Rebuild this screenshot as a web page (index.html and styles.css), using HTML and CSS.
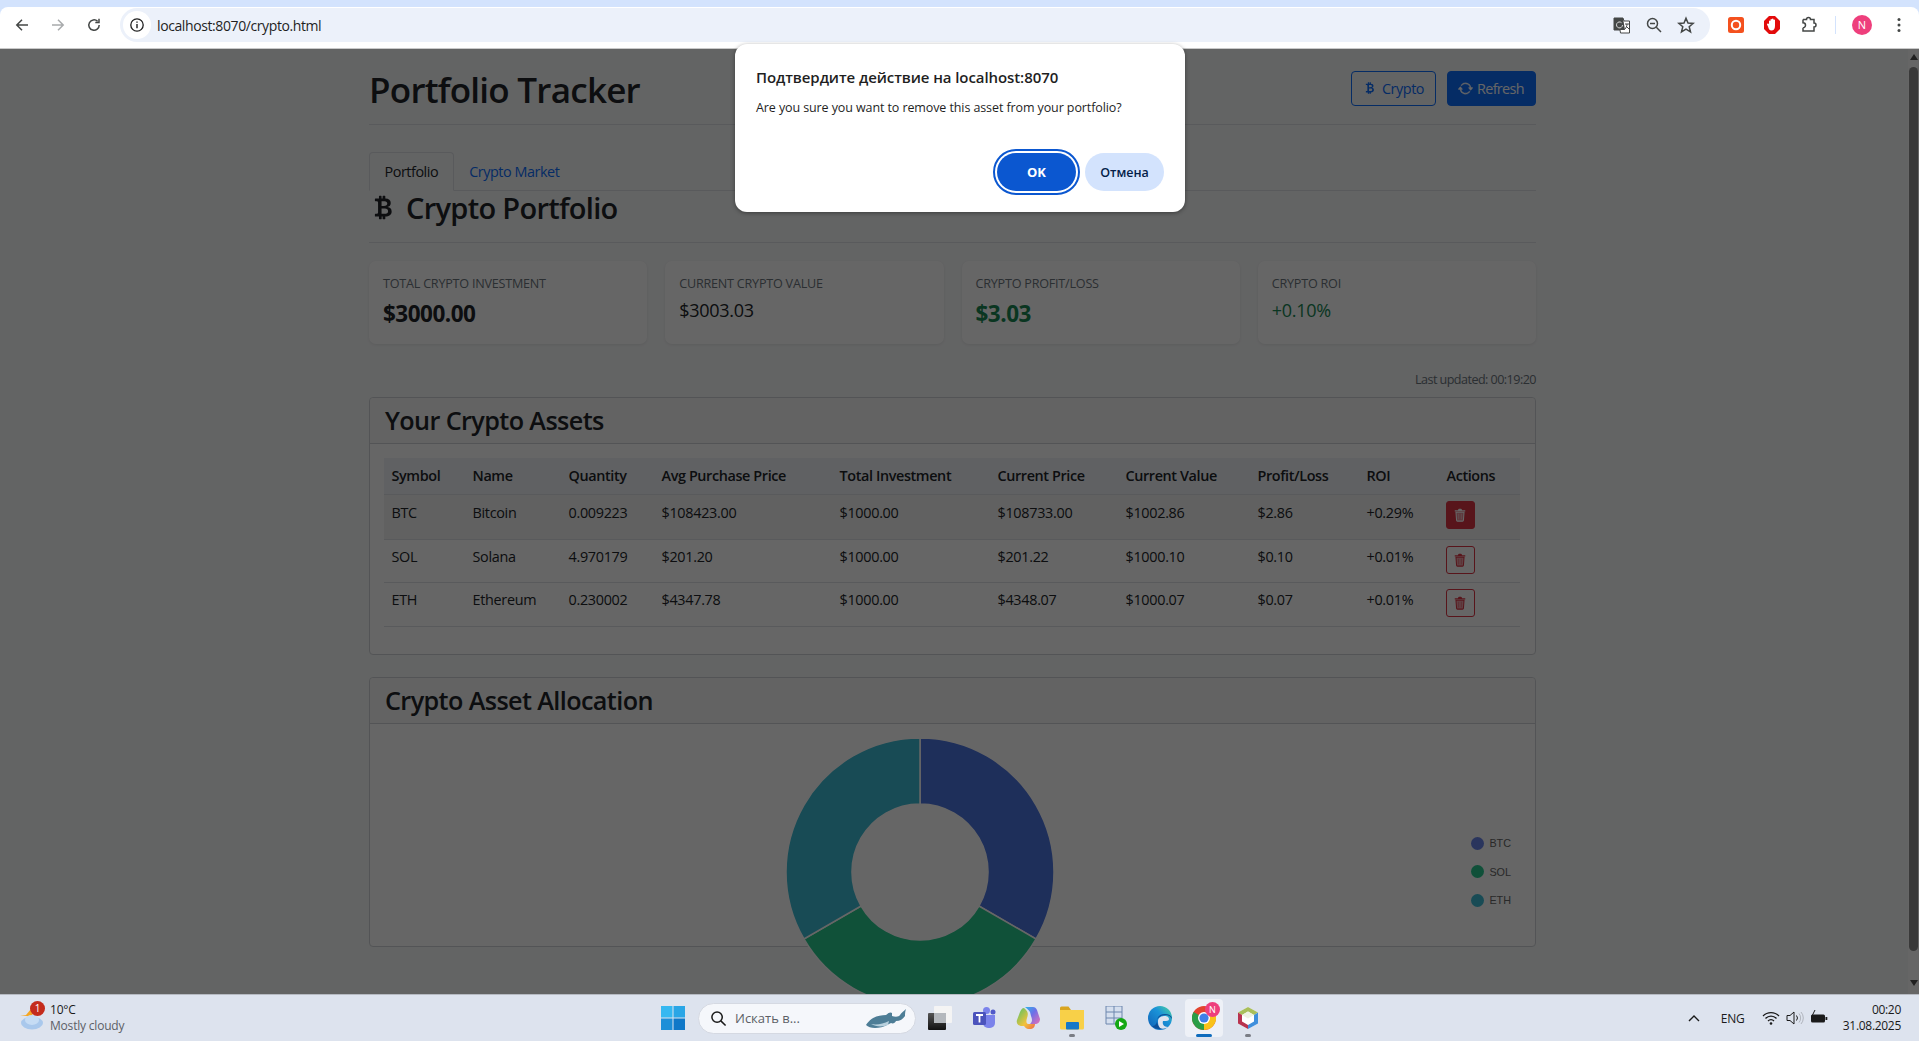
FILE: index.html
```html
<!DOCTYPE html>
<html lang="en">
<head>
<meta charset="utf-8">
<title>Portfolio Tracker</title>
<link rel="stylesheet" href="styles.css">
</head>
<body>
<div class="screen">
  <header class="chrome">
    <div class="toolbar">
      <div class="navs">
        <svg class="nav" viewBox="0 0 16 16"><path d="M14 8H3M8 2.8 2.8 8 8 13.200" fill="none" stroke="#444746" stroke-width="1.500"/></svg>
        <svg class="nav" viewBox="0 0 16 16"><path d="M2 8h11M8 2.800 13.200 8 8 13.200" fill="none" stroke="#a8aaac" stroke-width="1.500"/></svg>
        <svg class="nav" viewBox="0 0 16 16"><path d="M13.200 8A5.200 5.200 0 1 1 11.600 4.300M13 1.800v3.700H9.300" fill="none" stroke="#444746" stroke-width="1.500"/></svg>
      </div>
      <div class="omnibox">
        <span class="info"><svg viewBox="0 0 16 16" class="info-icon"><circle cx="8" cy="8" r="6.200" fill="none" stroke="#1f1f1f" stroke-width="1.300"/><path d="M8 7v4.200M8 4.400v1.300" stroke="#1f1f1f" stroke-width="1.400"/></svg></span>
        <span class="url">localhost:8070/crypto.html</span>
        <span class="omni-icons">
          <svg class="omni-icon" viewBox="0 0 18 18"><path d="M1 2h9l1 3h5.500v12H7.500L7 14H1z" fill="#fff" stroke="#444746"/><path d="M1 2h9l2 12H1z" fill="#444746"/><path d="M9.500 9a3 3 0 1 1-1-2.300" fill="none" stroke="#ddd" stroke-width="1"/><path d="M12 8h4M14 8c0 2-1 4-2 5M13 10l3 3" fill="none" stroke="#444746"/></svg>
          <svg class="omni-icon" viewBox="0 0 18 18"><circle cx="7.500" cy="7.500" r="5" fill="none" stroke="#444746" stroke-width="1.500"/><path d="M11.300 11.300 16 16M5 7.500h5" stroke="#444746" stroke-width="1.500"/></svg>
          <svg class="omni-icon" viewBox="0 0 18 18"><path d="M9 2.200 11 7l5.200.4-4 3.400 1.300 5.100L9 13.200l-4.500 2.700 1.300-5.100-4-3.400L7 7z" fill="none" stroke="#444746" stroke-width="1.500"/></svg>
        </span>
      </div>
      <div class="extensions">
        <svg class="ext ext-a" viewBox="0 0 16 16"><rect width="16" height="16" rx="2.500" fill="#f4511e"/><circle cx="8" cy="8" r="4.200" fill="none" stroke="#fff" stroke-width="2"/></svg>
        <svg class="ext ext-b" viewBox="0 0 16 18"><path d="M5 0h6l5 5v8l-5 5H5l-5-5V5z" fill="#e30b0b"/><path d="M5 8V5a.8.8 0 0 1 1.500 0V3.500a.8.8 0 0 1 1.500 0v-.5a.8.800 0 0 1 1.500 0v1a.8.800 0 0 1 1.500 0v6c0 3-1.500 4.500-3.500 4.500-2 0-2.800-1.500-3.500-4L3 8.500C3 7.500 4.500 7 5 8z" fill="#fff"/></svg>
        <svg class="ext ext-c" viewBox="0 0 18 18"><path d="M3 3.500h3.500a2 2 0 0 1 4 0H14v3.500a2 2 0 0 1 0 4V15H3v-3.200M3 11.800a2.400 2.400 0 0 0 0-5V3.500" fill="none" stroke="#444746" stroke-width="1.500"/></svg>
        <span class="sep"></span>
        <span class="avatar">N</span>
        <svg class="kebab" viewBox="0 0 4 16"><circle cx="2" cy="2.500" r="1.500" fill="#444746"/><circle cx="2" cy="8" r="1.500" fill="#444746"/><circle cx="2" cy="13.500" r="1.500" fill="#444746"/></svg>
      </div>
    </div>
  </header>

  <div class="viewport">
    <main class="page">
      <div class="topbar">
        <h1 class="title">Portfolio Tracker</h1>
        <div class="top-actions">
          <button class="btn btn-outline"><svg class="bi" viewBox="0 0 16 16"><use href="#i-btc"/></svg>Crypto</button>
          <button class="btn btn-solid"><svg class="bi bi-sync" viewBox="0 0 16 16"><use href="#i-refresh"/></svg>Refresh</button>
        </div>
      </div>
      <nav class="tabs">
        <span class="tab tab-active">Portfolio</span>
        <span class="tab">Crypto Market</span>
      </nav>
      <h2 class="section-title"><svg class="section-icon" viewBox="0 0 16 16"><use href="#i-btc"/></svg>Crypto Portfolio</h2>
      <section class="stats">
        <div class="stat"><div class="stat-label">TOTAL CRYPTO INVESTMENT</div><div class="stat-value stat-strong">$3000.00</div></div>
        <div class="stat"><div class="stat-label">CURRENT CRYPTO VALUE</div><div class="stat-value">$3003.03</div></div>
        <div class="stat"><div class="stat-label">CRYPTO PROFIT/LOSS</div><div class="stat-value stat-strong stat-green">$3.03</div></div>
        <div class="stat"><div class="stat-label">CRYPTO ROI</div><div class="stat-value stat-green">+0.10%</div></div>
      </section>
      <div class="updated">Last updated: 00:19:20</div>
      <section class="card card-assets">
        <h3 class="card-header">Your Crypto Assets</h3>
        <div class="card-body">
          <table class="assets">
            <colgroup>
              <col class="c1"><col class="c2"><col class="c3"><col class="c4"><col class="c5"><col class="c6"><col class="c7"><col class="c8"><col class="c9"><col class="c10">
            </colgroup>
            <thead>
              <tr><th>Symbol</th><th>Name</th><th>Quantity</th><th>Avg Purchase Price</th><th>Total Investment</th><th>Current Price</th><th>Current Value</th><th>Profit/Loss</th><th>ROI</th><th>Actions</th></tr>
            </thead>
            <tbody>
              <tr class="row-hover r1"><td>BTC</td><td>Bitcoin</td><td>0.009223</td><td>$108423.00</td><td>$1000.00</td><td>$108733.00</td><td>$1002.86</td><td>$2.86</td><td>+0.29%</td><td><button class="del del-on"><svg viewBox="0 0 16 16"><use href="#i-trash"/></svg></button></td></tr>
              <tr class="r2"><td>SOL</td><td>Solana</td><td>4.970179</td><td>$201.20</td><td>$1000.00</td><td>$201.22</td><td>$1000.10</td><td>$0.10</td><td>+0.01%</td><td><button class="del"><svg viewBox="0 0 16 16"><use href="#i-trash"/></svg></button></td></tr>
              <tr class="r3"><td>ETH</td><td>Ethereum</td><td>0.230002</td><td>$4347.78</td><td>$1000.00</td><td>$4348.07</td><td>$1000.07</td><td>$0.07</td><td>+0.01%</td><td><button class="del"><svg viewBox="0 0 16 16"><use href="#i-trash"/></svg></button></td></tr>
            </tbody>
          </table>
        </div>
      </section>
      <section class="card card-chart">
        <h3 class="card-header">Crypto Asset Allocation</h3>
        <div class="chart-body">
          <svg class="donut" viewBox="0 0 270 270">
            <path d="M135 2A133 133 0 0 1 250.200 201.500L193.500 168.750A67.500 67.500 0 0 0 135 67.500Z" fill="#4d75e2" stroke="#fff" stroke-width="1.500"/>
            <path d="M250.200 201.500A133 133 0 0 1 19.800 201.500L76.500 168.750A67.500 67.500 0 0 0 193.500 168.750Z" fill="#28cb8f" stroke="#fff" stroke-width="1.500"/>
            <path d="M19.800 201.500A133 133 0 0 1 135 2V67.500A67.500 67.500 0 0 0 76.500 168.750Z" fill="#3cbcd4" stroke="#fff" stroke-width="1.500"/>
          </svg>
          <ul class="legend">
            <li><span class="dot dot-btc"></span>BTC</li>
            <li><span class="dot dot-sol"></span>SOL</li>
            <li><span class="dot dot-eth"></span>ETH</li>
          </ul>
        </div>
      </section>
    </main>
    <div class="scrollbar">
      <span class="arrow-up"></span>
      <span class="thumb"></span>
      <span class="arrow-down"></span>
    </div>
    <div class="scrim"></div>
  </div>

  <footer class="taskbar">
    <div class="weather">
      <svg class="weather-icon" viewBox="0 0 26 26"><path d="M2 9h6l5-6 2 8z" fill="#f5a623"/><ellipse cx="14" cy="17" rx="11" ry="6.500" fill="#a9c8ec"/><ellipse cx="14" cy="14" rx="7" ry="5" fill="#c6dcf4"/></svg>
      <span class="badge">1</span>
      <div class="weather-text"><div class="temp">10°C</div><div class="cond">Mostly cloudy</div></div>
    </div>
    <div class="task-center">
      <span class="tb-item"><svg class="tb-icon" viewBox="0 0 24 24"><path d="M0 0h11.500v11.500H0z" fill="#35b8f1"/><path d="M12.500 0H24v11.500H12.500z" fill="#2aa6e6"/><path d="M0 12.500h11.500V24H0z" fill="#1d8fd8"/><path d="M12.500 12.500H24V24H12.500z" fill="#0f78c8"/></svg></span>
      <div class="search">
        <svg class="search-icon" viewBox="0 0 18 18"><circle cx="7.500" cy="7.500" r="5.500" fill="none" stroke="#1a1a1a" stroke-width="1.600"/><path d="m11.500 11.500 5 5" stroke="#1a1a1a" stroke-width="1.600"/></svg>
        <span class="search-text">Искать в...</span>
        <svg class="whale" viewBox="0 0 42 20"><path d="M1 17C6 9 14 7 21 7c3-3 5-3 6-2v3c3 1 7 1 8-1 1-2 4-4 6-6-1 3-1 5-1 7-2 3-5 5-9 5-1 2-3 3-5 2L22 17c-3 2-8 3-12 3-4 0-7-1-9-3z" fill="#4d7d96"/><path d="M6 16c6 1 12 0 18-3l-1 4c-5 2-12 2-17-1z" fill="#b7d0dd"/></svg>
      </div>
      <span class="tb-item"><svg class="tb-icon" viewBox="0 0 24 24"><defs><linearGradient id="g-dark" x1="0" y1="0" x2="0" y2="1"><stop offset="0" stop-color="#555"/><stop offset="1" stop-color="#111"/></linearGradient></defs><rect x="0" y="7" width="18" height="17" rx="1" fill="url(#g-dark)"/><rect x="6" y="0" width="18" height="17" rx="1" fill="#f4f4f4"/><rect x="6" y="7" width="12" height="10" fill="#b4b8bd"/></svg></span>
      <span class="tb-item"><svg class="tb-icon" viewBox="0 0 24 24"><circle cx="14.500" cy="4.500" r="3.500" fill="#7b83eb"/><circle cx="21" cy="6" r="2.500" fill="#5059c9"/><path d="M11 9h12v8a5 5 0 0 1-5 5h-2a5 5 0 0 1-5-5z" fill="#7b83eb"/><rect x="1" y="6" width="13" height="13" rx="1.500" fill="#4b53bc"/><path d="M4 9h7M7.500 9v7.500" stroke="#fff" stroke-width="1.800"/></svg></span>
      <span class="tb-item"><svg class="tb-icon" viewBox="0 0 24 24"><defs><linearGradient id="g-cop" x1="0" y1="0" x2="1" y2="1"><stop offset="0" stop-color="#2fb6e8"/><stop offset=".45" stop-color="#6c6fe8"/><stop offset="1" stop-color="#e86fb4"/></linearGradient><linearGradient id="g-cop2" x1="0" y1="0" x2="1" y2="1"><stop offset="0" stop-color="#4fc26a"/><stop offset=".6" stop-color="#f3c23a"/><stop offset="1" stop-color="#ef6b4a"/></linearGradient></defs><path d="M9 1h8c2 0 3 1 4 3l3 9c0 3-2 5-5 5h-5c3-3 2-5 1-8l-1-4C13 4 11 3 9 1z" fill="url(#g-cop)"/><path d="M8 2c-2 0-3 2-4 4l-3 8c-1 3 1 6 5 6h2c2 3 4 3 6 3 3 0 5-2 5-5h-6c-3 0-3-3-2-6 1-3 2-6-3-10z" fill="url(#g-cop2)"/></svg></span>
      <span class="tb-item tb-running"><svg class="tb-icon" viewBox="0 0 24 24"><path d="M0 2a1.500 1.500 0 0 1 1.500-1.500h7L11 4H0z" fill="#d9a520"/><path d="M0 4h24v18a1.500 1.500 0 0 1-1.500 1.500h-21A1.500 1.500 0 0 1 0 22z" fill="#f8d048"/><rect x="6" y="16" width="13" height="7.500" rx="1" fill="#1478c8"/></svg></span>
      <span class="tb-item"><svg class="tb-icon" viewBox="0 0 24 24"><path d="M2 0h16v18H2z" fill="#d5dfee" stroke="#6d86ad"/><path d="M2 6h16M2 12h16M10 0v18" stroke="#6d86ad"/><circle cx="17" cy="18" r="6" fill="#14a814"/><path d="M15 15v6l5-3z" fill="#fff"/></svg></span>
      <span class="tb-item"><svg class="tb-icon" viewBox="0 0 24 24"><defs><linearGradient id="g-edge" x1="0" y1="1" x2="1" y2="0"><stop offset="0" stop-color="#0f5fb5"/><stop offset=".6" stop-color="#1a93d8"/><stop offset="1" stop-color="#4fd89a"/></linearGradient></defs><circle cx="12" cy="12" r="12" fill="url(#g-edge)"/><path d="M24 13c0-3-3-5-7-5-5 0-8 3-8 7s3 7 7 7c-4 2-9 1-12-2 3 0 5-2 5-6 1-3 5-5 9-5 2 0 4 1 6 4z" fill="#0d4f98"/><path d="M10 15c0-3 3-5 6-5 3 0 5 1 5 3 0 1-1 2-3 2h-3c-1 3 1 6 5 6-3 2-6 2-8 1-2-2-2-5-2-7z" fill="#dde3ee"/></svg></span>
      <span class="tb-item tb-active">
        <svg class="tb-icon" viewBox="0 0 24 24"><circle cx="12" cy="12" r="12" fill="#e2442f"/><path d="M12 12 22.400 6A12 12 0 0 1 12 24z" fill="#f9c21a"/><path d="M12 24A12 12 0 0 1 1.600 6L12 12z" fill="#2a9d46"/><circle cx="12" cy="12" r="6" fill="#fff"/><circle cx="12" cy="12" r="4.600" fill="#3f7fe8"/></svg>
        <span class="tb-n">N</span>
      </span>
      <span class="tb-item tb-running"><svg class="tb-icon" viewBox="0 0 24 24"><path d="M12 1 22 6.500v11L12 23 2 17.500v-11z" fill="#fff"/><path d="M2 6.500 12 1l10 5.500-4 2.500-6-3.500L6 9z" fill="#a9bf5a"/><path d="M2 6.500v11L12 23v-4l-6-3.500V9z" fill="#b8334f"/><path d="M22 6.500v11L12 23v-4l6-3.500V9z" fill="#3f8fdc"/><path d="M12 5.500 18 9l-6 3.500L6 9z" fill="#eef2e2"/></svg></span>
    </div>
    <div class="tray">
      <svg class="caret" viewBox="0 0 12 8"><path d="M1 7l5-5 5 5" fill="none" stroke="#1a1a1a" stroke-width="1.400"/></svg>
      <span class="lang">ENG</span>
      <svg class="tray-icon" viewBox="0 0 18 16"><path d="M1 6a11 11 0 0 1 16 0M3.500 8.500a7.500 7.500 0 0 1 11 0M6 11a4 4 0 0 1 6 0" fill="none" stroke="#1a1a1a" stroke-width="1.200"/><circle cx="9" cy="13.500" r="1.300" fill="#1a1a1a"/></svg>
      <svg class="tray-icon" viewBox="0 0 18 16"><path d="M1 5.500h3L8 2v12l-4-3.500H1z" fill="none" stroke="#1a1a1a"/><path d="M10.500 5.500a4 4 0 0 1 0 5" fill="none" stroke="#1a1a1a"/><path d="M13 3.500a7 7 0 0 1 0 9M15 2a9 9 0 0 1 0 12" fill="none" stroke="#b0b4bc"/></svg>
      <svg class="tray-icon" viewBox="0 0 18 16"><rect x="1" y="4.500" width="14" height="8" rx="1.500" fill="#1a1a1a"/><rect x="15.500" y="7" width="1.800" height="3" fill="#1a1a1a"/><path d="M5 0 2 6h3L3.500 9" fill="none" stroke="#1a1a1a"/></svg>
      <div class="clock"><div>00:20</div><div>31.08.2025</div></div>
    </div>
  </footer>

  <div class="dialog" role="dialog">
    <div class="dialog-title">Подтвердите действие на localhost:8070</div>
    <div class="dialog-text">Are you sure you want to remove this asset from your portfolio?</div>
    <div class="dialog-actions">
      <button class="dlg-ok">OK</button>
      <button class="dlg-cancel">Отмена</button>
    </div>
  </div>
</div>

<svg class="defs" width="0" height="0">
  <symbol id="i-btc" viewBox="0 0 16 16"><path fill="currentColor" d="M5.500 13v1.250c0 .138.112.25.25.25h1a.25.25 0 0 0 .25-.25V13h.5v1.250c0 .138.112.25.25.25h1a.25.25 0 0 0 .25-.25V13h.084c1.992 0 3.416-1.033 3.416-2.820 0-1.502-1.007-2.323-2.186-2.440v-.088c.970-.242 1.683-.974 1.683-2.190C11.997 3.930 10.847 3 9.092 3H9V1.750a.25.25 0 0 0-.25-.25h-1a.25.25 0 0 0-.25.25V3h-.573V1.750a.25.25 0 0 0-.25-.25H5.750a.25.25 0 0 0-.25.25V3l-1.998.011a.25.25 0 0 0-.25.250v.989c0 .137.110.250.248.250l.755-.005a.75.75 0 0 1 .745.750v5.505a.75.75 0 0 1-.750.750l-.748.011a.25.25 0 0 0-.250.250v1c0 .138.112.250.250.250L5.500 13zm1.427-8.513h1.719c.906 0 1.438.498 1.438 1.312 0 .871-.575 1.362-1.877 1.362h-1.280V4.487zm0 4.051h1.840c1.137 0 1.756.580 1.756 1.524 0 .953-.626 1.450-2.158 1.450H6.927V8.539z"/></symbol>
  <symbol id="i-refresh" viewBox="0 0 16 16"><path fill="currentColor" stroke="currentColor" stroke-width=".5" d="M11.534 7h3.932a.25.25 0 0 1 .192.41l-1.966 2.360a.25.25 0 0 1-.384 0l-1.966-2.360a.25.25 0 0 1 .192-.41zm-11 2h3.932a.25.25 0 0 0 .192-.41L2.692 6.230a.25.25 0 0 0-.384 0L.342 8.590A.25.25 0 0 0 .534 9z"/><path fill="currentColor" stroke="currentColor" stroke-width=".5" d="M8 3c-1.552 0-2.940.707-3.857 1.818a.5.5 0 1 1-.771-.636A6.002 6.002 0 0 1 13.917 7H12.900A5.002 5.002 0 0 0 8 3zM3.100 9a5.002 5.002 0 0 0 8.757 2.182.5.5 0 1 1 .771.636A6.002 6.002 0 0 1 2.083 9H3.100z"/></symbol>
  <symbol id="i-trash" viewBox="0 0 16 16"><path fill="currentColor" d="M6 1.500A1 1 0 0 1 7 .8h2a1 1 0 0 1 1 .7L10.300 2.500H14v1.500H2V2.500h3.700z"/><path fill="currentColor" fill-opacity=".45" stroke="currentColor" stroke-width="1.200" d="M3.400 4.800h9.200l-.7 9.200a1 1 0 0 1-1 1H5.100a1 1 0 0 1-1-1z"/><path stroke="currentColor" stroke-width=".8" stroke-opacity=".6" d="M6.500 6.500v6.500M9.500 6.500v6.500"/></symbol>
</svg>
</body>
</html>
```

FILE: styles.css
```css
* { box-sizing: border-box; }
html, body { margin: 0; height: 100%; overflow: hidden; }
body { font-family: "Open Sans", "Noto Sans", sans-serif; color: #212529; background: #f8f9fa; }
.defs { position: absolute; }
.screen { position: relative; display: flex; flex-direction: column; height: 1041px; width: 1919px; overflow: hidden; }

/* browser chrome */
.chrome { height: 49px; flex: none; background: #d3e3fd; padding-top: 7px; border-bottom: 1px solid #c9c9c9; }
.toolbar { height: 41px; background: #fff; border-radius: 8px 8px 0 0; display: flex; align-items: flex-start; position: relative; }
.navs { width: 120px; height: 35px; display: flex; align-items: center; gap: 20px; padding-left: 14px; flex: none; }
.nav { width: 16px; height: 16px; }
.omnibox { margin-top: 1px; width: 1590px; height: 34px; background: #ecf1fa; border-radius: 17px; display: flex; align-items: center; padding-left: 3px; flex: none; }
.info { width: 28px; height: 28px; border-radius: 50%; background: #fff; display: flex; align-items: center; justify-content: center; flex: none; }
.info-icon { width: 16px; height: 16px; }
.url { margin-left: 6px; font-size: 14px; color: #1f1f1f; letter-spacing: -.4px; flex: 1; }
.omni-icons { display: flex; gap: 14px; padding-right: 15px; }
.omni-icon { width: 18px; height: 18px; }
.extensions { flex: 1; height: 35px; display: flex; align-items: center; position: relative; }
.ext { flex: none; }
.ext-a { width: 16px; height: 16px; margin-left: 18px; }
.ext-b { width: 16px; height: 18px; margin-left: 20px; }
.ext-c { width: 18px; height: 18px; margin-left: 20px; }
.sep { width: 1px; height: 18px; background: #d3e3fd; margin-left: 17px; flex: none; }
.avatar { width: 20px; height: 20px; border-radius: 50%; background: #ee3f7c; color: #fff; font-size: 11px; display: flex; align-items: center; justify-content: center; margin-left: 16px; flex: none; }
.kebab { width: 4px; height: 16px; margin-left: 25px; flex: none; }

/* page */
.viewport { position: relative; flex: 1; min-height: 0; display: flex; overflow: hidden; background: #f8f9fa; }
.page { flex: 1; min-width: 0; padding: 0 372px 0 369px; }
.scrim { position: absolute; inset: 0; background: rgba(0, 0, 0, .6); }
.scrollbar { width: 11px; flex: none; display: flex; flex-direction: column; align-items: center; background: #fff; padding-top: 5px; }
.arrow-up { width: 0; height: 0; border: 4px solid transparent; border-top: 0; border-bottom: 6px solid #505050; }
.thumb { width: 9px; height: 884px; margin-top: 7px; border-radius: 5px; background: #8f8f8f; }
.arrow-down { width: 0; height: 0; margin-top: 29px; border: 4px solid transparent; border-bottom: 0; border-top: 6px solid #505050; }

.topbar { display: flex; justify-content: space-between; align-items: center; height: 76px; padding-top: 6px; border-bottom: 1px solid #dee2e6; }
.title { margin: 0; font-size: 35px; font-weight: 600; letter-spacing: -.75px; color: #212529; line-height: 1.2; }
.top-actions { display: flex; gap: 11px; padding-bottom: 3px; }
.btn { height: 35px; border-radius: 4px; font: inherit; font-size: 14.400px; letter-spacing: -.45px; display: inline-flex; align-items: center; gap: 5px; padding: 0 11px; background: none; white-space: nowrap; }
.btn .bi { width: 14px; height: 14px; flex: none; }
.btn .bi-sync { width: 15px; height: 15px; }
.btn-outline { border: 1px solid #0d6efd; color: #0d6efd; width: 85px; }
.btn-solid { border: 1px solid #0d6efd; background: #0d6efd; color: #fff; width: 89px; padding: 0 10px; gap: 4px; letter-spacing: -.65px; }

.tabs { margin-top: 27px; height: 39px; display: flex; border-bottom: 1px solid #dee2e6; }
.tab { padding: 0 14.500px; height: 39px; font-size: 14.400px; letter-spacing: -.45px; line-height: 38px; color: #0d6efd; border: 1px solid transparent; border-radius: 4px 4px 0 0; }
.tab-active { background: #f8f9fa; border-color: #dee2e6 #dee2e6 #f8f9fa; color: #212529; }

.section-title { margin: 0; height: 52px; font-size: 29px; font-weight: 600; letter-spacing: -.7px; display: flex; align-items: center; line-height: 38px; padding-bottom: 18px; border-bottom: 1px solid #dee2e6; color: #212529; }
.section-icon { width: 29px; height: 29px; margin-right: 8px; flex: none; color: #212529; }

.stats { margin-top: 18px; display: grid; grid-template-columns: repeat(4, 1fr); gap: 18px; }
.stat { height: 83px; background: #fff; border-radius: 7px; box-shadow: 0 1px 3px rgba(0, 0, 0, .08); padding: 14px 14px; }
.stat-label { font-size: 12.600px; letter-spacing: -.22px; color: #6c757d; line-height: 18px; }
.stat-value { font-size: 18px; letter-spacing: -.3px; margin-top: 4px; line-height: 27px; color: #212529; }
.stat-strong { font-size: 22.500px; font-weight: 700; margin-top: 6px; line-height: 30px; letter-spacing: -.5px; }
.stat-green { color: #198754; }

.updated { text-align: right; margin-top: 27px; font-size: 12.600px; letter-spacing: -.55px; line-height: 18px; height: 26px; color: #6c757d; }

.card { background: #fff; border: 1px solid #d0d3d6; border-radius: 4px; }
.card-assets { height: 258px; }
.card-chart { margin-top: 22px; height: 270px; }
.card-header { margin: 0; height: 46px; background: #f7f7f7; border-bottom: 1px solid #d0d3d6; padding: 0 14px 0 15px; font-size: 25.200px; font-weight: 600; letter-spacing: -.6px; line-height: 45px; color: #212529; border-radius: 4px 4px 0 0; }
.card-body { padding: 14px 14px 0; }

.assets { width: 1136px; table-layout: fixed; border-collapse: collapse; font-size: 14.400px; letter-spacing: -.3px; color: #212529; }
.c1 { width: 81px; } .c2 { width: 96px; } .c3 { width: 93px; } .c4 { width: 178px; } .c5 { width: 158px; }
.c6 { width: 128px; } .c7 { width: 132px; } .c8 { width: 109px; } .c9 { width: 80px; } .c10 { width: 81px; }
.assets th { background: #f1f3f7; font-weight: 600; text-align: left; padding: 0 7.500px; height: 36px; border-bottom: 1px solid #dee2e6; letter-spacing: -.38px; }
.assets td { padding: 0 7.500px; vertical-align: top; border-bottom: 1px solid #dee2e6; white-space: nowrap; }
.assets .r1 { height: 45px; background: #f2f2f2; }
.assets .r2 { height: 43px; }
.assets .r3 { height: 44px; }
.assets .r1 td { padding-top: 8px; }
.assets .r2 td { padding-top: 7px; }
.assets .r3 td { padding-top: 7px; }
.del { width: 29px; height: 28px; margin: -1px 0 0 -1px; padding: 0; display: flex; align-items: center; justify-content: center; border: 1px solid #dc3545; color: #dc3545; background: none; border-radius: 3px; }
.del svg { width: 14px; height: 14px; }
.del-on { background: #dc3545; color: #fff; margin-top: -2px; }

.chart-body { position: relative; height: 222px; display: flex; justify-content: center; padding: 12px 66px 0 0; }
.donut { width: 272px; height: 272px; flex: none; overflow: visible; }
.legend { position: absolute; right: 24px; top: 105px; margin: 0; padding: 0; list-style: none; font-family: "Liberation Sans", sans-serif; font-size: 10.800px; color: #666; }
.legend li { display: flex; align-items: center; gap: 5px; height: 28.500px; letter-spacing: 0; }
.dot { width: 13px; height: 13px; border-radius: 50%; }
.dot-btc { background: #6a85e8; }
.dot-sol { background: #28c990; }
.dot-eth { background: #3cbcd4; }

/* taskbar */
.taskbar { position: relative; height: 47px; flex: none; background: #dde3ee; border-top: 1px solid #b6bac2; }
.weather { position: absolute; left: 18px; top: 0; height: 46px; display: flex; align-items: center; }
.weather-icon { width: 26px; height: 26px; margin-top: 2px; }
.badge { position: absolute; left: 12px; top: 6px; width: 15px; height: 15px; border-radius: 50%; background: #c42b1c; color: #fff; font-size: 10px; line-height: 15px; text-align: center; }
.weather-text { margin-left: 6px; font-size: 12px; line-height: 16px; letter-spacing: -.2px; }
.temp { color: #1a1a1a; }
.cond { color: #5c5f66; }

.task-center { position: absolute; left: 651px; top: 0; height: 46px; display: flex; align-items: center; }
.tb-item { position: relative; width: 44px; height: 38px; display: flex; align-items: center; justify-content: center; flex: none; }
.tb-icon { width: 24px; height: 24px; }
.tb-running::after { content: ""; position: absolute; left: 19px; bottom: 0; width: 6px; height: 3px; border-radius: 2px; background: #7a7d85; }
.tb-active { background: #eef1f7; border-radius: 4px; width: 38px; margin: 0 3px; }
.tb-active::after { content: ""; position: absolute; left: 11px; bottom: 0; width: 16px; height: 3px; border-radius: 2px; background: #0f6cbd; }
.tb-n { position: absolute; left: 20px; top: 3px; width: 15px; height: 15px; border-radius: 50%; background: #ee3f7c; color: #fff; font-size: 9px; line-height: 15px; text-align: center; }
.search { width: 218px; height: 31px; margin: 0 2px 0 3px; border-radius: 16px; background: #f5f7fb; border: 1px solid #d5d9e2; display: flex; align-items: center; padding-left: 11px; flex: none; }
.search-icon { width: 17px; height: 17px; flex: none; }
.search-text { margin-left: 8px; font-size: 13px; color: #5c5f66; flex: 1; }
.whale { width: 42px; height: 20px; margin-right: 8px; flex: none; }

.tray { position: absolute; right: 18px; top: 0; height: 46px; display: flex; align-items: center; }
.caret { width: 12px; height: 8px; }
.lang { margin-left: 21px; width: 30px; font-size: 12px; letter-spacing: -.2px; color: #1a1a1a; }
.tray-icon { width: 18px; height: 16px; margin-left: 6px; }
.caret + .lang + .tray-icon { margin-left: 11px; }
.clock { margin-left: 15px; text-align: right; font-size: 12px; line-height: 16px; letter-spacing: -.3px; color: #1a1a1a; }

/* JS confirm dialog */
.dialog { position: absolute; left: 735px; top: 44px; width: 450px; height: 168px; background: #fff; border-radius: 12px; box-shadow: 0 1px 4px rgba(0, 0, 0, .4); padding: 23px 21px 0; }
.dialog-title { font-size: 15px; font-weight: 600; color: #1f1f1f; line-height: 20px; letter-spacing: -.08px; }
.dialog-text { margin-top: 12px; font-size: 12.500px; color: #1f1f1f; line-height: 18px; letter-spacing: -.1px; }
.dialog-actions { position: absolute; right: 21px; bottom: 21px; display: flex; align-items: center; }
.dlg-ok { width: 79px; height: 38px; margin-right: 9px; border: 0; border-radius: 19px; background: #0b57d0; color: #fff; font: inherit; font-size: 13px; font-weight: 700; outline: 2px solid #0b57d0; outline-offset: 2px; }
.dlg-cancel { width: 79px; height: 38px; border: 0; border-radius: 19px; background: #d3e3fd; color: #041e49; font: inherit; font-size: 12.500px; font-weight: 600; }
```
